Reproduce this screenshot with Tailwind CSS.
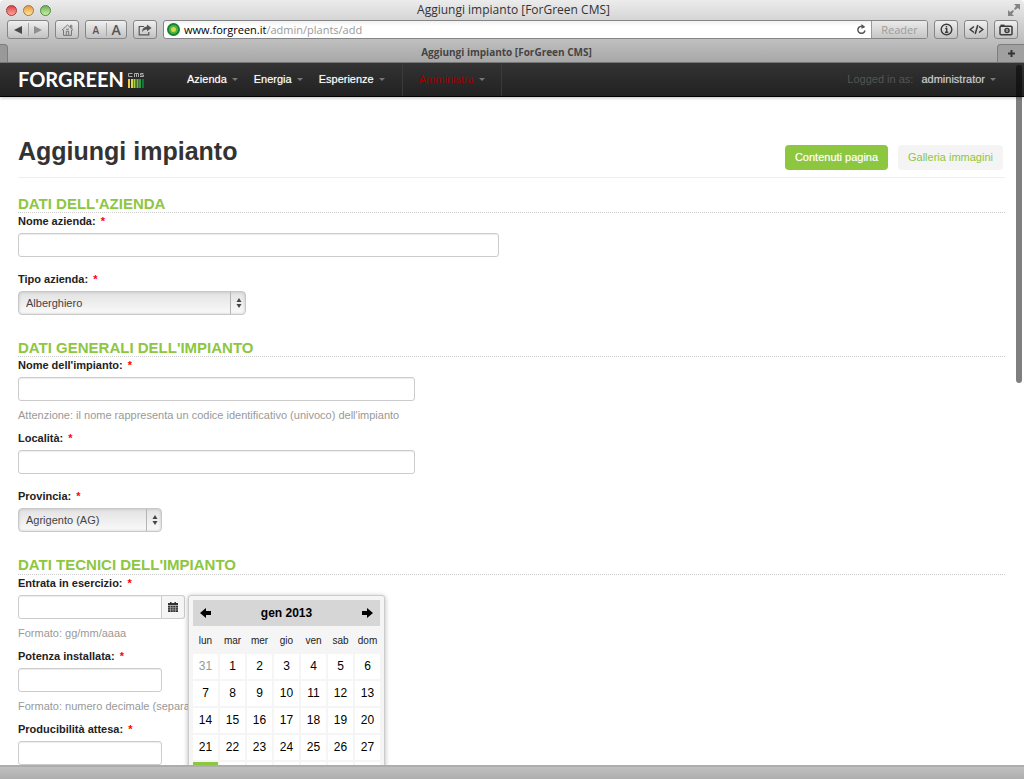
<!DOCTYPE html>
<html lang="it">
<head>
<meta charset="utf-8">
<title>Aggiungi impianto [ForGreen CMS]</title>
<script src="https://cdn.jsdelivr.net/npm/@tailwindcss/browser@4"></script>
</head>
<body class="bg-white">
<div class="flex h-screen flex-col overflow-hidden rounded-t-sm bg-white font-['Liberation_Sans',sans-serif] text-[11px] leading-[17px] text-[#222]">

  <!-- Browser window chrome -->
  <header class="shrink-0 bg-linear-to-b from-[#ececec] to-[#a6a6a6] font-['Open_Sans',sans-serif]">
    <div class="grid h-5 grid-cols-[1fr_auto_1fr] items-center pr-[3px] pl-[6px]">
      <div class="flex gap-[6px]">
        <button aria-label="Chiudi" class="size-[11px] rounded-full border border-[#a03a3a] bg-linear-to-b from-[#d84545] to-[#ffa3a0]"></button>
        <button aria-label="Riduci" class="size-[11px] rounded-full border border-[#a9743a] bg-linear-to-b from-[#e79a3c] to-[#ffe49a]"></button>
        <button aria-label="Ingrandisci" class="size-[11px] rounded-full border border-[#4f8642] bg-linear-to-b from-[#6cb158] to-[#c9f0a8]"></button>
      </div>
      <div class="text-[12px] leading-5 text-[#333]">Aggiungi impianto [ForGreen CMS]</div>
      <button aria-label="Schermo intero" class="justify-self-end">
        <svg width="14" height="14" viewBox="0 0 14 14" fill="#858585"><path d="M7 1h6v6l-2-2-3 2-1-1 2-3zM7 13H1V7l2 2 3-2 1 1-2 3z"/></svg>
      </button>
    </div>
    <div class="flex h-5 gap-[6px] pr-[6px] pl-[7px]">
      <div class="flex h-[19px] w-[42px] items-center rounded-[3px] border border-[#858585] bg-linear-to-b from-[#f0f0f0] to-[#c2c2c2]">
        <button aria-label="Indietro" class="flex flex-1 justify-center"><svg width="8" height="8" viewBox="0 0 8 8"><path d="M8 0v8L0 4z" fill="#484848"/></svg></button>
        <span class="h-[13px] w-px bg-[#a5a5a5]"></span>
        <button aria-label="Avanti" class="flex flex-1 justify-center"><svg width="8" height="8" viewBox="0 0 8 8"><path d="M0 0v8l8-4z" fill="#8f8f8f"/></svg></button>
      </div>
      <button aria-label="Pagina iniziale" class="flex h-[19px] w-6 items-center justify-center rounded-[3px] border border-[#858585] bg-linear-to-b from-[#f0f0f0] to-[#c2c2c2]">
        <svg width="13" height="12" viewBox="0 0 13 12" fill="none" stroke="#777"><path d="M.8 6.4 6.5 1l5.7 5.4M9.5 3.5V1.3h1.3v3.3M2.5 6v5.4h8V6M5.3 11.4V7.2h2.4v4.2M5 5.2h3"/></svg>
      </button>
      <div class="flex h-[19px] w-[42px] items-center rounded-[3px] border border-[#858585] bg-linear-to-b from-[#f0f0f0] to-[#c2c2c2] text-[#555]">
        <button aria-label="Riduci testo" class="flex-1 text-[10px] leading-4 font-semibold">A</button>
        <span class="h-[13px] w-px bg-[#a5a5a5]"></span>
        <button aria-label="Ingrandisci testo" class="flex-1 text-[14px] leading-4 font-semibold">A</button>
      </div>
      <button aria-label="Condividi" class="flex h-[19px] w-6 items-center justify-center rounded-[3px] border border-[#858585] bg-linear-to-b from-[#f0f0f0] to-[#c2c2c2]">
        <svg width="14" height="12" viewBox="0 0 14 12"><path d="M6 2.5H1.2v8.3h9.6V8" fill="none" stroke="#555" stroke-width="1.2"/><path d="M9 .5 13.6 4 9 7.3V5.4C6.600 5.300 5 6.500 4 8.300 4 5 5.800 2.800 9 2.500z" fill="#555"/></svg>
      </button>
      <div class="flex h-[19px] flex-1 overflow-hidden rounded-[3px] border border-[#858585] bg-linear-to-b from-[#f1f1f1] to-white to-30%">
        <div class="flex flex-1 items-center pr-1 pl-[3px]">
          <svg width="13" height="13" viewBox="0 0 13 13"><circle cx="6.500" cy="6.500" r="6.500" fill="#108235"/><circle cx="6.500" cy="6.500" r="4.600" fill="#55b03a"/><circle cx="6.500" cy="6.500" r="2.500" fill="#d5d94b"/></svg>
          <div class="ml-1 flex-1 text-[11px] leading-[17px] text-[#999]"><span class="text-black">www.forgreen.it</span>/admin/plants/add</div>
          <button aria-label="Ricarica"><svg width="11" height="11" viewBox="0 0 11 11"><path d="M8.300 3.500A3.600 3.600 0 1 0 9 6.500" fill="none" stroke="#555" stroke-width="1.500"/><path d="M5.500 0 9 2.700 5.500 5z" fill="#555"/></svg></button>
        </div>
        <button class="w-14 border-l border-[#9a9a9a] bg-linear-to-b from-[#ebebeb] to-[#c6c6c6] text-[11px] leading-[17px] text-[#9c9c9c]">Reader</button>
      </div>
      <button aria-label="Informazioni" class="flex h-[19px] w-6 items-center justify-center rounded-[3px] border border-[#858585] bg-linear-to-b from-[#f0f0f0] to-[#c2c2c2]">
        <svg width="13" height="13" viewBox="0 0 13 13" fill="none" stroke="#3b3b3b"><circle cx="6.500" cy="6.500" r="5.300" stroke-width="1.400"/><path d="M6.500 3v1.500M5.200 5.600h1.500v3.700M5 9.300h3.200" stroke-width="1.400"/></svg>
      </button>
      <button aria-label="Sorgente" class="flex h-[19px] w-6 items-center justify-center rounded-[3px] border border-[#858585] bg-linear-to-b from-[#f0f0f0] to-[#c2c2c2]">
        <svg width="15" height="11" viewBox="0 0 15 11" fill="none" stroke="#3b3b3b" stroke-width="1.500"><path d="M5 2.500 1.200 5.500 5 8.500M10 2.500l3.800 3-3.800 3M8.800 1 6.200 10"/></svg>
      </button>
      <button aria-label="Istantanea" class="flex h-[19px] w-6 items-center justify-center rounded-[3px] border border-[#858585] bg-linear-to-b from-[#f0f0f0] to-[#c2c2c2]">
        <svg width="14" height="12" viewBox="0 0 14 12" fill="none" stroke="#3b3b3b" stroke-width="1.500"><rect x="1" y="2.300" width="12" height="8.400" rx="1"/><path d="M1.500 1.500h4" stroke-width="1.800"/><circle cx="8" cy="6.500" r="2"/><path d="M7.500 6.500h1" stroke-width="1"/></svg>
      </button>
    </div>
    <div class="flex h-[23px] items-end border-b border-[#777]">
      <div class="h-[18px] w-2 rounded-tr-[4px] border-t border-r border-[#7d7d7d] bg-[#999]"></div>
      <div class="flex-1 pl-2 text-center text-[10px] leading-5 font-bold text-[#444]">Aggiungi impianto [ForGreen CMS]</div>
      <button aria-label="Nuova scheda" class="flex h-[18px] w-[27px] items-center justify-center rounded-tl-[4px] border-t border-l border-[#7d7d7d] bg-[#a0a0a0]">
        <svg width="7" height="7" viewBox="0 0 7 7" stroke="#333" stroke-width="2"><path d="M3.500 0v7M0 3.500h7"/></svg>
      </button>
    </div>
  </header>

  <!-- Web page viewport -->
  <div class="relative min-h-0 flex-1 overflow-hidden">
    <nav class="flex h-[34px] items-stretch border-b border-black bg-linear-to-b from-[#333] to-[#222] pr-7 pl-[18px] leading-[33px] text-white shadow-[0_1px_3px_rgba(0,0,0,0.25)]">
      <a href="#" class="flex w-[152px] items-center gap-1 font-['Lato',sans-serif] text-[20px] font-bold">FORGREEN
        <svg width="16" height="16" viewBox="0 0 16 16"><path d="M4.500 1.500h-4v3h4M6.500 5V1.500h4V5M8.500 1.500V5M15.500 1.500h-3V3h3v1.500h-3.500" fill="none" stroke="#aaa"/><path d="M0 7h2v9H0z" fill="#f3c842"/><path d="M3 7h2v9H3z" fill="#d5d94b"/><path d="M5.500 7h2v9h-2z" fill="#a8cf45"/><path d="M8.500 7h2v9h-2z" fill="#6dba45"/><path d="M11 7h2v9h-2z" fill="#2b9d48"/><path d="M14 7h2v9h-2z" fill="#11743a"/></svg>
      </a>
      <a href="#" class="ml-[17px] flex items-center gap-[5px] text-shadow-[0_0_1px_#ffffff80]">Azienda<svg width="6" height="3" viewBox="0 0 6 3"><path d="M0 0h6L3 3z" fill="#777"/></svg></a>
      <a href="#" class="ml-4 flex items-center gap-[5px] text-shadow-[0_0_1px_#ffffff80]">Energia<svg width="6" height="3" viewBox="0 0 6 3"><path d="M0 0h6L3 3z" fill="#777"/></svg></a>
      <a href="#" class="ml-4 flex items-center gap-[5px] text-shadow-[0_0_1px_#ffffff80]">Esperienze<svg width="6" height="3" viewBox="0 0 6 3"><path d="M0 0h6L3 3z" fill="#777"/></svg></a>
      <a href="#" class="ml-[17px] flex items-center gap-[5px] border-x border-[#3a3a3a] px-4 text-[#a00000]">Amministra<svg width="6" height="3" viewBox="0 0 6 3"><path d="M0 0h6L3 3z" fill="#777"/></svg></a>
      <span class="ml-auto text-[#555]">Logged in as:</span>
      <a href="#" class="ml-2 flex items-center gap-[5px] text-[#ccc] text-shadow-[0_0_1px_#cccccc80]">administrator<svg width="6" height="3" viewBox="0 0 6 3"><path d="M0 0h6L3 3z" fill="#777"/></svg></a>
    </nav>

    <main class="pt-9 pr-[19px] pl-[18px]">
      <div class="flex items-start justify-between border-b border-[#eee] pr-[2px] pb-[7px]">
        <h1 class="text-[25px] leading-[36px] font-bold text-[#333]">Aggiungi impianto</h1>
        <div class="flex gap-[10px] pt-3 leading-[25px]">
          <button class="w-[103px] rounded-[4px] bg-[#8dc63f] text-white text-shadow-[0_0_1px_#ffffff80]">Contenuti pagina</button>
          <button class="w-[105px] rounded-[4px] bg-[#f4f4f4] text-[#8dc63f]">Galleria immagini</button>
        </div>
      </div>

      <form class="pt-[17px]">
        <section class="mb-6">
          <h2 class="border-b border-dotted border-[#ccc] text-[15px] leading-[17px] font-bold text-[#8dc63f]">DATI DELL'AZIENDA</h2>
          <label for="azienda" class="mb-[3px] block font-bold">Nome azienda: <span class="ml-[2px] text-[#f00]">*</span></label>
          <input id="azienda" type="text" class="block h-6 w-[481px] rounded-[3px] border border-[#ccc] px-2 inset-shadow-[0_1px_1px_rgba(0,0,0,0.075)]">
          <label for="tipo" class="mt-[14px] mb-[3px] block font-bold">Tipo azienda: <span class="ml-[2px] text-[#f00]">*</span></label>
          <div class="relative w-[228px]">
            <select id="tipo" class="block h-6 w-full appearance-none rounded-[4px] border border-[#c8c8c8] bg-linear-to-b from-[#e2e2e2] to-[#fafafa] px-[7px] text-[#444] inset-shadow-[0_0_3px_rgba(0,0,0,0.18)]"><option>Alberghiero</option></select>
            <span class="pointer-events-none absolute inset-y-px right-0 flex w-4 items-center justify-center border-l border-[#b5b5b5]"><svg width="6" height="10" viewBox="0 0 6 10" fill="#444"><path d="M3 0l2.500 4h-5zM3 10l2.500-4h-5z"/></svg></span>
          </div>
        </section>

        <section class="mb-6">
          <h2 class="border-b border-dotted border-[#ccc] text-[15px] leading-[17px] font-bold text-[#8dc63f]">DATI GENERALI DELL'IMPIANTO</h2>
          <label for="impianto" class="mb-[3px] block font-bold">Nome dell'impianto: <span class="ml-[2px] text-[#f00]">*</span></label>
          <input id="impianto" type="text" class="block h-6 w-[397px] rounded-[3px] border border-[#ccc] px-2 inset-shadow-[0_1px_1px_rgba(0,0,0,0.075)]">
          <p class="my-[6px] text-[#999]">Attenzione: il nome rappresenta un codice identificativo (univoco) dell'impianto</p>
          <label for="localita" class="mb-[3px] block font-bold">Località: <span class="ml-[2px] text-[#f00]">*</span></label>
          <input id="localita" type="text" class="block h-6 w-[397px] rounded-[3px] border border-[#ccc] px-2 inset-shadow-[0_1px_1px_rgba(0,0,0,0.075)]">
          <label for="provincia" class="mt-[14px] mb-[3px] block font-bold">Provincia: <span class="ml-[2px] text-[#f00]">*</span></label>
          <div class="relative w-[144px]">
            <select id="provincia" class="block h-6 w-full appearance-none rounded-[4px] border border-[#c8c8c8] bg-linear-to-b from-[#e2e2e2] to-[#fafafa] px-[7px] text-[#444] inset-shadow-[0_0_3px_rgba(0,0,0,0.18)]"><option>Agrigento (AG)</option></select>
            <span class="pointer-events-none absolute inset-y-px right-0 flex w-4 items-center justify-center border-l border-[#b5b5b5]"><svg width="6" height="10" viewBox="0 0 6 10" fill="#444"><path d="M3 0l2.500 4h-5zM3 10l2.500-4h-5z"/></svg></span>
          </div>
        </section>

        <section>
          <h2 class="border-b border-dotted border-[#ccc] text-[15px] leading-[18px] font-bold text-[#8dc63f]">DATI TECNICI DELL'IMPIANTO</h2>
          <label for="entrata" class="mb-[3px] block font-bold">Entrata in esercizio: <span class="ml-[2px] text-[#f00]">*</span></label>
          <div class="relative flex">
            <input id="entrata" type="text" class="block h-6 w-[144px] rounded-l-[3px] border border-[#ccc] px-2 inset-shadow-[0_1px_1px_rgba(0,0,0,0.075)]">
            <button type="button" aria-label="Apri calendario" class="flex h-6 w-[23px] items-center justify-center rounded-r-[3px] border border-l-0 border-[#ccc] bg-[#f5f5f5]">
              <svg width="10" height="11" viewBox="0 0 10 11"><path d="M0 1h10v2H0zM2 0h1.500v2H2zM6.500 0H8v2H6.500zM0 3.500h10V10H0z" fill="#333"/><path d="M0 3.500h10M0 5.700h10M0 7.900h10M2.500 3.500V10M5 3.500V10M7.500 3.500V10" stroke="#bbb" stroke-width=".6"/></svg>
            </button>
            <!-- Date picker popup -->
            <div class="absolute top-0 left-[170px] z-10 rounded-[3px] border border-[#ccc] bg-[#f5f5f5] p-1 shadow-[0_1px_5px_rgba(0,0,0,0.3)]">
              <div class="flex h-[26px] items-center justify-between bg-[#d6d6d6] px-[7px] text-[12px] font-bold text-black">
                <button type="button" aria-label="Mese precedente"><svg width="11" height="10" viewBox="0 0 11 10"><path d="M6 0v3h5v4H6v3L0 5z"/></svg></button>
                <span>gen 2013</span>
                <button type="button" aria-label="Mese successivo"><svg width="11" height="10" viewBox="0 0 11 10"><path d="M5 0v3H0v4h5v3l6-5z"/></svg></button>
              </div>
              <table class="-mr-[2px] w-[189px] table-fixed border-separate border-spacing-0 text-center text-[12px] leading-[25px] text-black">
                <thead>
                  <tr class="h-7 text-[10px] text-[#222] [&_th]:p-0 [&_th]:pr-[2px] [&_th]:font-normal"><th>lun</th><th>mar</th><th>mer</th><th>gio</th><th>ven</th><th>sab</th><th>dom</th></tr>
                </thead>
                <tbody class="[&_td]:border-r-2 [&_td]:border-b-2 [&_td]:border-[#f5f5f5] [&_td]:bg-white [&_td]:p-0">
                  <tr class="h-[27px]"><td class="text-[#999]">31</td><td>1</td><td>2</td><td>3</td><td>4</td><td>5</td><td>6</td></tr>
                  <tr class="h-[27px]"><td>7</td><td>8</td><td>9</td><td>10</td><td>11</td><td>12</td><td>13</td></tr>
                  <tr class="h-[27px]"><td>14</td><td>15</td><td>16</td><td>17</td><td>18</td><td>19</td><td>20</td></tr>
                  <tr class="h-[27px]"><td>21</td><td>22</td><td>23</td><td>24</td><td>25</td><td>26</td><td>27</td></tr>
                  <tr class="h-[27px]"><td class="bg-[#8dc63f]!"></td><td></td><td></td><td></td><td></td><td></td><td></td></tr>
                </tbody>
              </table>
            </div>
          </div>
          <p class="my-[6px] text-[#999]">Formato: gg/mm/aaaa</p>
          <label for="potenza" class="mb-[3px] block font-bold">Potenza installata: <span class="ml-[2px] text-[#f00]">*</span></label>
          <input id="potenza" type="text" class="block h-6 w-[144px] rounded-[3px] border border-[#ccc] px-2 inset-shadow-[0_1px_1px_rgba(0,0,0,0.075)]">
          <p class="my-[6px] text-[#999]">Formato: numero decimale (separa</p>
          <label for="producibilita" class="mb-[3px] block font-bold">Producibilità attesa: <span class="ml-[2px] text-[#f00]">*</span></label>
          <input id="producibilita" type="text" class="block h-6 w-[144px] rounded-[3px] border border-[#ccc] px-2 inset-shadow-[0_1px_1px_rgba(0,0,0,0.075)]">
        </section>
      </form>
    </main>
    <div class="absolute top-[2px] right-[2px] h-[318px] w-[6px] rounded-full bg-black/50"></div>
  </div>

  <footer class="h-[14px] shrink-0 border-t-2 border-[#adadad] bg-linear-to-b from-[#c0c0c0] to-[#aeaeae]"></footer>
</div>
</body>
</html>
